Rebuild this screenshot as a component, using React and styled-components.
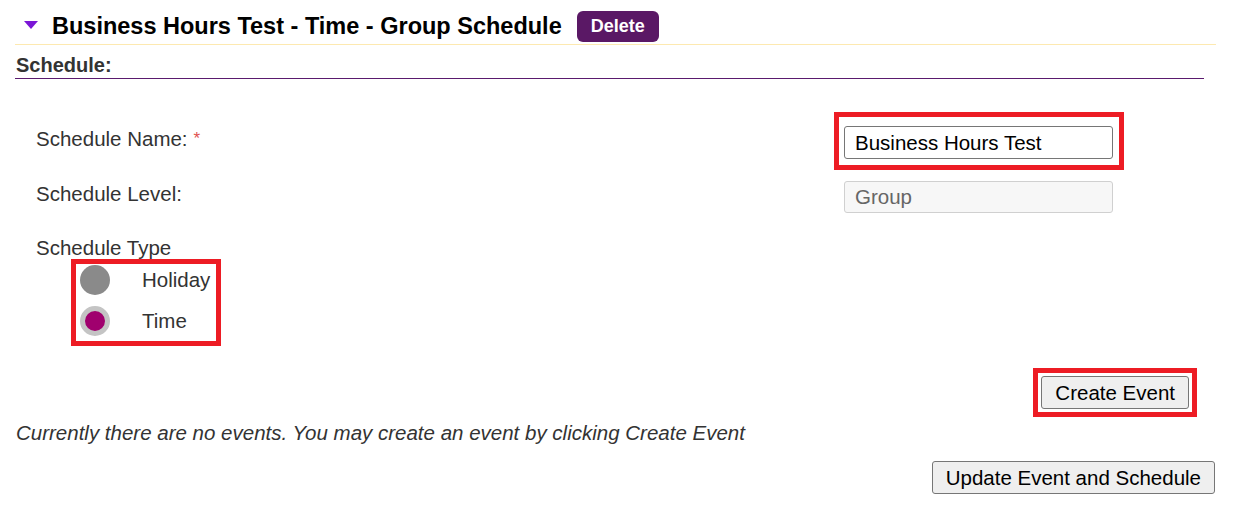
import React from 'react';
import styled, {createGlobalStyle} from 'styled-components';

const GlobalStyle = createGlobalStyle`
  body {
    margin: 0;
    background: #ffffff;
    font-family: "Liberation Sans", Arial, sans-serif;
  }
`;

const Page = styled.div`
  width: 1201px;
  margin-left: 15px;
  color: #333;
`;

const Header = styled.div`
  box-sizing: border-box;
  display: flex;
  align-items: center;
  height: 45px;
  padding: 8px 0 0 9px;
  border-bottom: 1px solid #fde9b0;
`;

const Caret = styled.span`
  width: 0;
  height: 0;
  border-left: 7.5px solid transparent;
  border-right: 7.5px solid transparent;
  border-top: 8px solid #7b16d6;
  margin-right: 14px;
  margin-top: -2px;
`;

const Title = styled.h2`
  margin: 0;
  font-size: 23.5px;
  font-weight: bold;
  color: #000;
`;

const DeleteButton = styled.button`
  margin-left: 15px;
  height: 31px;
  padding: 0 14px;
  background: #5a1865;
  color: #fff;
  border: none;
  border-radius: 6px;
  font-family: inherit;
  font-size: 18px;
  font-weight: bold;
`;

const SectionTitle = styled.div`
  margin-right: 12px;
  padding: 10px 0 3px 1px;
  font-size: 20px;
  font-weight: bold;
  line-height: 20px;
  color: #333;
  border-bottom: 1px solid #5a1a6e;
`;

const Form = styled.div`
  display: grid;
  grid-template-columns: 1fr 290px;
  padding: 33px 92px 0 21px;
  row-gap: 11px;
`;

const Label = styled.div`
  font-size: 20.5px;
  line-height: 23px;
  padding-top: ${p => p.$top || 0}px;
  color: #333;
`;

const Required = styled.span`
  color: #e0524f;
  font-size: 17px;
  vertical-align: top;
  margin-left: 6px;
`;

const Highlight = styled.div`
  border: 5px solid #ed1c24;
  padding: ${p => p.$pad};
  display: ${p => (p.$inline ? 'inline-block' : 'block')};
`;

const FieldCell = styled.div`
  padding-left: ${p => p.$left || 0}px;
`;

const TextInput = styled.input`
  box-sizing: border-box;
  width: 269px;
  height: 33px;
  padding: 0 10px;
  border: 1px solid #767676;
  border-radius: 3px;
  font-family: inherit;
  font-size: 20.5px;
  color: #000;
  background: #fff;
  outline: none;
`;

const ReadOnlyInput = styled(TextInput)`
  height: 32px;
  border-color: #d0d0d0;
  background: #f7f7f7;
  color: #666;
`;

const TypeBlock = styled.div`
  grid-column: 1 / span 2;
  padding-top: 12px;
`;

const RadioGroup = styled(Highlight)`
  margin-left: 35px;
  width: 150px;
  box-sizing: border-box;
  display: flex;
  flex-direction: column;
  gap: 11px;
`;

const RadioRow = styled.label`
  display: flex;
  align-items: center;
  gap: 32px;
  font-size: 20.5px;
  color: #333;
`;

const RadioDot = styled.span`
  box-sizing: border-box;
  flex-shrink: 0;
  width: 30px;
  height: 30px;
  border-radius: 50%;
  background: ${p => (p.$checked ? '#a0006e' : '#8a8a8a')};
  border: ${p => (p.$checked ? '5px solid #c4c4c4' : 'none')};
`;

const Actions = styled.div`
  display: flex;
  justify-content: flex-end;
  padding-top: ${p => p.$top}px;
  padding-right: ${p => p.$right}px;
`;

const Button = styled.button`
  height: 33px;
  padding: 0 13px;
  background: #efefef;
  border: 1px solid #767676;
  border-radius: 3px;
  font-family: inherit;
  font-size: 20.5px;
  color: #000;
`;

const Notice = styled.p`
  margin: 4px 0 0 1px;
  font-size: 20.5px;
  line-height: 23px;
  font-style: italic;
  color: #333;
`;

const App = () => {
    return (
        <Page>
            <GlobalStyle/>
            <Header>
                <Caret/>
                <Title>Business Hours Test - Time - Group Schedule</Title>
                <DeleteButton>Delete</DeleteButton>
            </Header>
            <SectionTitle>Schedule:</SectionTitle>

            <Form>
                <Label $top={15}>Schedule Name:<Required>*</Required></Label>
                <Highlight $pad="9px 5px 6px 5px">
                    <TextInput defaultValue="Business Hours Test"/>
                </Highlight>

                <Label $top={1}>Schedule Level:</Label>
                <FieldCell $left={10}>
                    <ReadOnlyInput value="Group" readOnly/>
                </FieldCell>

                <TypeBlock>
                    <Label>Schedule Type</Label>
                    <RadioGroup $pad="1px 6px 5px 4px">
                        <RadioRow><RadioDot/>Holiday</RadioRow>
                        <RadioRow><RadioDot $checked/>Time</RadioRow>
                    </RadioGroup>
                </TypeBlock>
            </Form>

            <Actions $top={22} $right={19}>
                <Highlight $pad="3px 3px" $inline>
                    <Button>Create Event</Button>
                </Highlight>
            </Actions>

            <Notice>Currently there are no events. You may create an event by clicking Create Event</Notice>

            <Actions $top={17} $right={1}>
                <Button>Update Event and Schedule</Button>
            </Actions>
        </Page>
    );
};

export default App;
